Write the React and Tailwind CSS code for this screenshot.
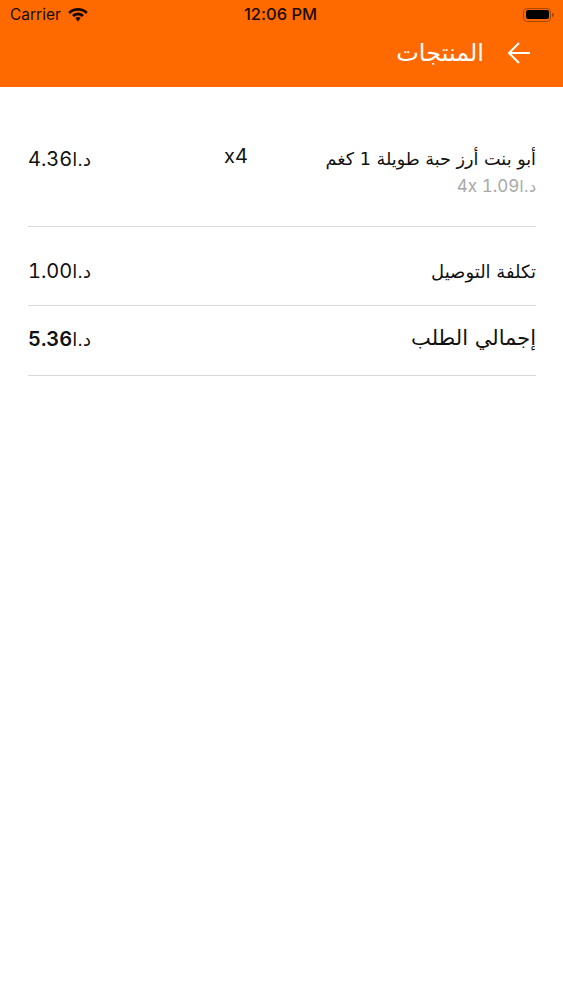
import React from 'react';

const latin = "font-['Inter','Roboto',sans-serif] [font-feature-settings:'calt'_0]";
const arabic = "font-['DejaVu_Sans',sans-serif]";

const Price = ({ value, bold }) => (
  <div className={`flex items-baseline text-[#111] ${latin}`} dir="ltr">
    <span className={`text-[20px] tabular-nums ${bold ? 'font-semibold' : 'font-normal'}`}>{value}</span>
    <span className={`text-[18px] tracking-[3.500px] ${arabic}`} dir="rtl">د.ا</span>
  </div>
);

const StatusBar = () => (
  <div className="relative flex h-[29px] items-center justify-between pl-[10px] pr-[9px] text-[#1a0a00]">
    <div className="flex items-center gap-[7px]">
      <span className={`text-[15.5px] ${latin}`}>Carrier</span>
      <svg width="20" height="14" viewBox="0 0 20 14" fill="currentColor">
        <path d="M10 0C6.200 0 2.800 1.500.2 3.900l1.900 2C4.200 4 7 2.800 10 2.800s5.800 1.200 7.900 3.100l1.900-2C17.200 1.500 13.800 0 10 0z" />
        <path d="M10 4.600c-2.300 0-4.400.9-6 2.400l2 2.100c1.100-1 2.500-1.600 4-1.600s2.900.6 4 1.600l2-2.100c-1.600-1.500-3.700-2.400-6-2.400z" />
        <path d="M10 9c-1 0-1.900.4-2.600 1l2.600 3.800 2.600-3.800C11.900 9.400 11 9 10 9z" />
      </svg>
    </div>
    <span className={`absolute left-[244px] text-[16.500px] font-medium ${latin}`}>12:06 PM</span>
    <div className="flex items-center">
      <div className="flex h-[14px] w-[28px] items-center justify-center rounded-[4px] border-[1.5px] border-[#a84800]">
        <div className="h-[9px] w-[23px] rounded-[2px] bg-black" />
      </div>
      <div className="ml-[1px] h-[4px] w-[2px] rounded-r bg-[#a84800]" />
    </div>
  </div>
);

const Row = ({ className, children }) => (
  <div className={`border-b border-[#d9d9d9] ${className}`}>{children}</div>
);

export default function App() {
  return (
    <div className="min-h-[1000px] bg-white">
      <header className="h-[87px] bg-[#ff6a00]">
        <StatusBar />
        <div className="flex items-center justify-end gap-[23px] pr-[32px] pt-[1px] text-white">
          <span className={`text-[24px] leading-[46px] ${arabic}`} dir="rtl">المنتجات</span>
          <svg width="24" height="24" viewBox="0 0 24 24" fill="none" stroke="currentColor" strokeWidth="2">
            <path d="M23 12H2M12 2 2 12l10 10" />
          </svg>
        </div>
      </header>

      <main className="pl-[28px] pr-[27px]">
        <Row className="grid h-[140px] grid-cols-[196px_auto_1fr] items-start pt-[57px]">
          <Price value="4.36" />
          <span className={`text-[20px] leading-[24px] text-[#111] ${latin}`}>x4</span>
          <div className="flex flex-col items-start" dir="rtl">
            <span className={`text-[17.600px] leading-[30px] text-[#111] ${arabic}`}>أبو بنت أرز حبة طويلة 1 كغم</span>
            <div className="flex items-baseline text-[#a8a8a8]" dir="ltr">
              <span className={`text-[17px] tabular-nums ${latin}`}>4x 1.09</span>
              <span className={`text-[16px] tracking-[3px] ${arabic}`} dir="rtl">د.ا</span>
            </div>
          </div>
        </Row>
        <Row className="flex h-[79px] items-center justify-between pt-[10px]">
          <Price value="1.00" />
          <span className={`text-[18px] text-[#111] ${arabic}`} dir="rtl">تكلفة التوصيل</span>
        </Row>
        <Row className="flex h-[70px] items-center justify-between pb-[4px]">
          <Price value="5.36" bold />
          <span className={`text-[21px] text-[#111] ${arabic}`} dir="rtl">إجمالي الطلب</span>
        </Row>
      </main>
    </div>
  );
}
